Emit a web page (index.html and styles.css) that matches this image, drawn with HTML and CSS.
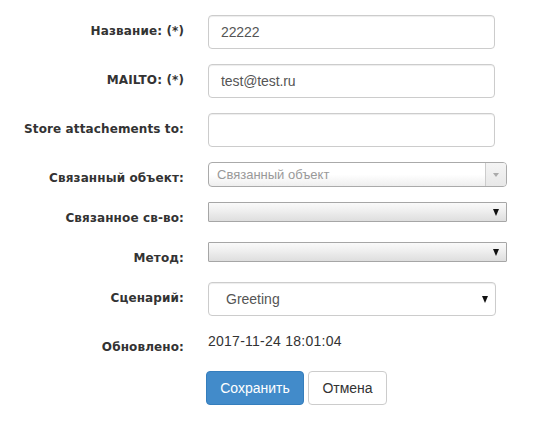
FILE: index.html
```html
<!DOCTYPE html>
<html lang="ru">
<head>
<meta charset="utf-8">
<title>Форма</title>
<link rel="stylesheet" href="styles.css">
</head>
<body>
<form class="form">
  <div class="row">
    <label class="label">Название: (*)</label>
    <div class="control"><div class="input">22222</div></div>
  </div>
  <div class="row">
    <label class="label">MAILTO: (*)</label>
    <div class="control"><div class="input">test@test.ru</div></div>
  </div>
  <div class="row">
    <label class="label">Store attachements to:</label>
    <div class="control"><div class="input"></div></div>
  </div>
  <div class="row">
    <label class="label">Связанный объект:</label>
    <div class="control">
      <div class="select2">
        <span class="select2-text">Связанный объект</span>
        <span class="select2-arrow"><span class="tri-grey"></span></span>
      </div>
    </div>
  </div>
  <div class="row">
    <label class="label">Связанное св-во:</label>
    <div class="control"><div class="native"><span class="tri"></span></div></div>
  </div>
  <div class="row">
    <label class="label">Метод:</label>
    <div class="control"><div class="native"><span class="tri"></span></div></div>
  </div>
  <div class="row">
    <label class="label">Сценарий:</label>
    <div class="control"><div class="scenario"><span>Greeting</span><span class="tri"></span></div></div>
  </div>
  <div class="row">
    <label class="label">Обновлено:</label>
    <div class="control"><div class="static">2017-11-24 18:01:04</div></div>
  </div>
  <div class="row">
    <div></div>
    <div class="actions">
      <button type="button" class="btn btn-primary">Сохранить</button>
      <button type="button" class="btn btn-default">Отмена</button>
    </div>
  </div>
</form>
</body>
</html>
```

FILE: styles.css
```css
html, body {
  margin: 0;
  padding: 0;
  background: #fff;
}
body {
  font-family: "Liberation Sans", Arial, sans-serif;
  font-size: 14px;
  color: #333;
}
.form {
  padding-top: 15px;
}
.row {
  display: grid;
  grid-template-columns: 184px 1fr;
  column-gap: 24px;
  margin-bottom: 15px;
  align-items: start;
}
.label {
  font-family: "DejaVu Sans", sans-serif;
  font-weight: bold;
  font-size: 12px;
  line-height: 18px;
  letter-spacing: 0.12px;
  padding-top: 7px;
  text-align: right;
  color: #333;
}
.input {
  box-sizing: border-box;
  width: 287px;
  height: 34px;
  border: 1px solid #ccc;
  border-radius: 4px;
  padding: 6px 12px;
  line-height: 20px;
  color: #555;
  letter-spacing: -0.1px;
  box-shadow: inset 0 1px 1px rgba(0,0,0,0.075);
}
.select2 {
  box-sizing: border-box;
  width: 299px;
  height: 25px;
  border: 1px solid #aaa;
  border-radius: 4px;
  background: linear-gradient(to bottom, #fff 0%, #fff 50%, #eee 100%);
  display: flex;
  align-items: stretch;
  overflow: hidden;
}
.select2-text {
  flex: 1;
  padding-left: 8px;
  font-size: 13px;
  line-height: 23px;
  color: #999;
}
.select2-arrow {
  width: 20px;
  border-left: 1px solid #ccc;
  background: linear-gradient(to bottom, #f4f4f4, #e8e8e8);
  display: flex;
  align-items: center;
  justify-content: center;
}
.tri-grey {
  width: 0;
  height: 0;
  border-left: 3px solid transparent;
  border-right: 3px solid transparent;
  border-top: 4px solid #aaa;
}
.native {
  box-sizing: border-box;
  width: 299px;
  height: 20px;
  border: 1px solid #a6a6a6;
  border-radius: 1px;
  background: linear-gradient(to bottom, #fafafa 0%, #ededed 50%, #dedede 100%);
  display: flex;
  align-items: center;
  justify-content: flex-end;
  padding-right: 7px;
}
.tri {
  width: 0;
  height: 0;
  border-left: 3.5px solid transparent;
  border-right: 3.5px solid transparent;
  border-top: 7px solid #111;
}
.scenario {
  box-sizing: border-box;
  width: 288px;
  height: 34px;
  border: 1px solid #ccc;
  border-radius: 4px;
  padding: 0 7px 0 17px;
  display: flex;
  align-items: center;
  justify-content: space-between;
  color: #555;
  box-shadow: inset 0 1px 1px rgba(0,0,0,0.075);
}
.static {
  line-height: 20px;
  letter-spacing: 0.25px;
  color: #333;
}
.actions {
  display: flex;
  gap: 4px;
  margin-left: -2px;
}
.btn {
  box-sizing: border-box;
  height: 34px;
  padding: 6px 12px;
  font-family: "Liberation Sans", Arial, sans-serif;
  font-size: 14px;
  line-height: 20px;
  border-radius: 4px;
  border: 1px solid transparent;
  cursor: pointer;
}
.btn-primary {
  background: #428bca;
  border-color: #357ebd;
  color: #fff;
  width: 98px;
}
.btn-default {
  background: #fff;
  border-color: #ccc;
  color: #333;
  width: 79px;
}
```
